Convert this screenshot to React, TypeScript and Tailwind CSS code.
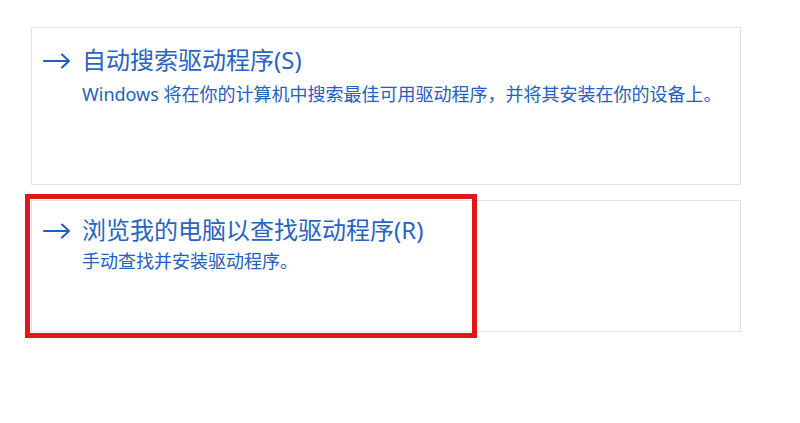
import React from "react";

const ArrowIcon = () => (
  <svg width="28" height="16" viewBox="0 0 28 16" fill="none" className="shrink-0">
    <path d="M1 8H26M19 1.5L26 8L19 14.5" stroke="#1f5fbf" strokeWidth="2" strokeLinecap="round" strokeLinejoin="round" />
  </svg>
);

type OptionProps = {
  title: string;
  desc: string;
  height: string;
  pad: string;
  gap: string;
  highlighted?: boolean;
};

const OptionCard = ({ title, desc, height, pad, gap, highlighted }: OptionProps) => (
  <div className={`relative w-[710px] ${height} border border-[#e3e3e3] bg-white`}>
    <div className={`flex ${pad}`}>
      <div className="pl-[11px] pr-[11px] pt-[9px]">
        <ArrowIcon />
      </div>
      <div className={`flex flex-col ${gap}`}>
        <div className="text-[24px] leading-[32px] text-[#2a63c2]">{title}</div>
        <div className="text-[18px] leading-[20px] text-[#2460bd]">{desc}</div>
      </div>
    </div>
    {highlighted && (
      <div className="absolute left-[-7px] top-[-7px] w-[452px] h-[144px] border-[5px] border-[#e0161a]" />
    )}
  </div>
);

export default function App() {
  return (
    <div
      className="w-[800px] h-[423px] bg-white pl-[31px] pt-[27px] flex flex-col gap-[15px]"
      style={{ fontFamily: '"Noto Sans", "Noto Sans CJK SC", sans-serif' }}
    >
      <OptionCard
        title="自动搜索驱动程序(S)"
        desc="Windows 将在你的计算机中搜索最佳可用驱动程序，并将其安装在你的设备上。"
        height="h-[158px]"
        pad="pt-[16px]"
        gap="gap-[8px]"
      />
      <OptionCard
        title="浏览我的电脑以查找驱动程序(R)"
        desc="手动查找并安装驱动程序。"
        height="h-[132px]"
        pad="pt-[13px]"
        gap="gap-[5px]"
        highlighted
      />
    </div>
  );
}
